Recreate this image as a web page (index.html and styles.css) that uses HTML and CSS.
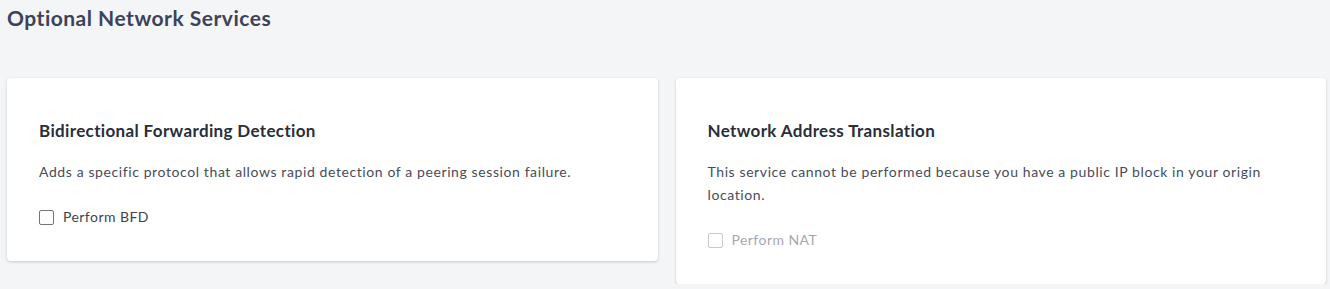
FILE: index.html
```html
<!DOCTYPE html>
<html lang="en">
<head>
  <meta charset="UTF-8">
  <meta name="viewport" content="width=device-width, initial-scale=1">
  <title>Optional Network Services</title>
  <link rel="stylesheet" href="styles.css">
</head>
<body>
  <h1 class="page-title">Optional Network Services</h1>

  <div class="services">
    <div class="card">
      <h2>Bidirectional Forwarding Detection</h2>
      <p>Adds a specific protocol that allows rapid detection of a peering session failure.</p>
      <label class="check">
        <input type="checkbox">
        <span class="box"></span>
        Perform BFD
      </label>
    </div>

    <div class="card">
      <h2>Network Address Translation</h2>
      <p>This service cannot be performed because you have a public IP block in your origin location.</p>
      <label class="check disabled">
        <input type="checkbox" disabled>
        <span class="box"></span>
        Perform NAT
      </label>
    </div>
  </div>
</body>
</html>
```

FILE: styles.css
```css
* {
  margin: 0;
  padding: 0;
  box-sizing: border-box;
}
body {
  font-family: Lato, "Open Sans", sans-serif;
  background: #f4f5f7;
  color: #33384a;
  padding: 0 4px 0 7px;
}
.page-title {
  font-size: 21px;
  font-weight: 700;
  color: #3c4358;
  line-height: 36px;
  letter-spacing: 0.5px;
}
.services {
  display: grid;
  grid-template-columns: 1fr 1fr;
  gap: 18px;
  margin-top: 42px;
  align-items: start;
}
.card {
  background: #fff;
  border-radius: 4px;
  box-shadow: 0 1px 3px rgba(0, 0, 0, 0.18);
  padding: 41px 32px 33px;
}
.card h2 {
  font-size: 17px;
  font-weight: 700;
  color: #2a2e38;
  line-height: 24px;
  letter-spacing: 0.35px;
  margin-bottom: 17px;
}
.card p {
  font-size: 14px;
  line-height: 23px;
  color: #474c5a;
  letter-spacing: 0.6px;
  margin-bottom: 23px;
}
.check {
  display: flex;
  align-items: center;
  gap: 9px;
  font-size: 14px;
  line-height: 22px;
  color: #3e4350;
  letter-spacing: 0.45px;
  cursor: pointer;
}
.check input {
  display: none;
}
.check .box {
  width: 15px;
  height: 15px;
  border: 1px solid #72757d;
  border-radius: 2px;
  background: #fff;
}
.check.disabled {
  color: #a5a8ae;
  cursor: default;
}
.check.disabled .box {
  border-color: #c7c9cd;
}
```
